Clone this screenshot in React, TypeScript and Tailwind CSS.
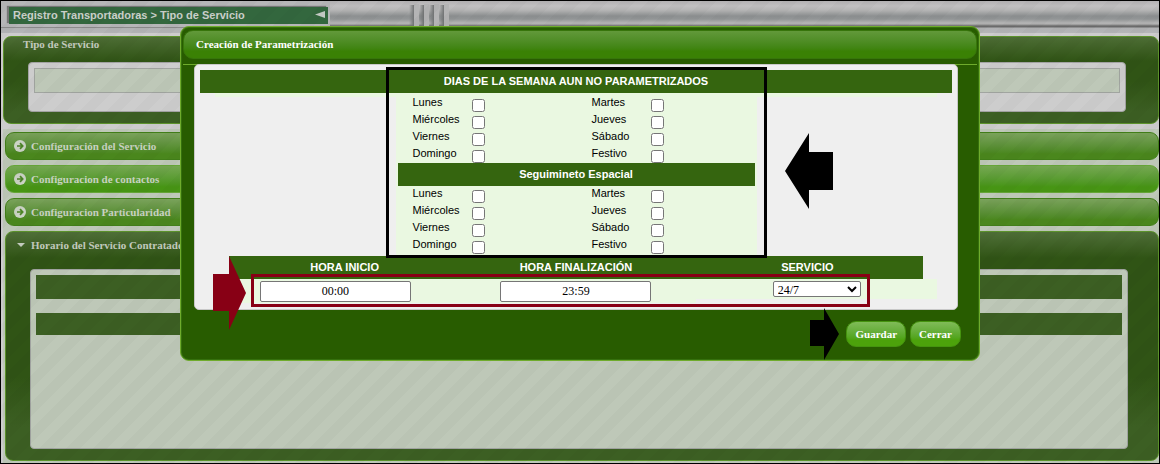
import React from "react";

const SERVICES = ["Configuración del Servicio", "Configuracion de contactos", "Configuracion Particularidad"];
const DAYS = ["Lunes", "Martes", "Miércoles", "Jueves", "Viernes", "Sábado", "Domingo", "Festivo"];

function PageHeader() {
  return (
    <header className="relative flex h-[32px] items-start bg-[linear-gradient(to_bottom,#b3b1b3_0px,#c1c0c1_5px,#b6b6b6_9px,#8d9091_15px,#929596_18px,#b5b5b5_22px,#b0b0b0_23px,#6b6b6b_25px,#6b6b6b_26px,#b0b1b3_27px,#b5b6b9_32px)]">
      <div className="flex h-[26px] w-[329px] items-center bg-[#b6b6b8] pt-[3px] pl-2 shadow-[0_1px_0_#8b8b8b]">
        <h1 className="flex h-[17px] w-[319px] items-center justify-between bg-[#33673e] pr-[3px] pl-1 font-['Liberation_Sans',sans-serif] text-[11px] font-bold text-[#cbd0cb] shadow-[-2px_-1px_1px_#777]">
          Registro Transportadoras &gt; Tipo de Servicio
          <svg className="mb-[2px] h-[7px] w-[10px]" viewBox="0 0 10 7" aria-hidden="true">
            <path d="M0 3.5 10 0v7z" fill="#c6ccc6" />
          </svg>
        </h1>
      </div>
      <svg className="ml-[79px] h-[25px] w-[48px]" viewBox="0 0 48 25" aria-hidden="true">
        <defs>
          <linearGradient id="rib">
            <stop offset="0" stopColor="#777a7b" stopOpacity="0" />
            <stop offset="1" stopColor="#707273" />
          </linearGradient>
        </defs>
        {[5, 15, 25, 35].map((x) => (
          <g key={x}>
            <path d={`M${x - 5} 4h5v21h-5z`} fill="url(#rib)" />
            <path d={`M${x} 3h5v22h-5z`} fill="#b4b4b5" />
          </g>
        ))}
      </svg>
    </header>
  );
}

function ArrowCircle() {
  return (
    <svg className="size-3 shrink-0" viewBox="0 0 12 12" aria-hidden="true">
      <circle cx="6" cy="6" r="6" fill="#cbd3c5" />
      <path d="M3 6h5M6 3.2 8.7 6 6 8.8" fill="none" stroke="#4d8527" strokeWidth="1.7" />
    </svg>
  );
}

function Background() {
  return (
    <div className="relative flex min-h-[462px] flex-col overflow-hidden bg-[#cdcccd]">
      <PageHeader />
      <section className="mt-[3px] ml-[2px] flex h-[88px] flex-col rounded-[8px] border border-[#5c932b] bg-[linear-gradient(to_bottom,#4d6d35_0px,#305415_24px,#305415_45px,#3c5f23_75px)] pr-[32px] pl-[24px]">
        <h2 className="ml-[-5px] h-[25px] text-[11px] leading-[15px] font-bold text-[#c3cabe]">Tipo de Servicio</h2>
        <div className="h-[50px] rounded-[4px] border border-[#a3a3a3] bg-[#cdcdcd] p-[5px]">
          <div className="h-[25px] border border-[#a1a5a0] bg-[#bec8b8]" />
        </div>
      </section>
      <div className="mt-[5px] ml-[2px] flex flex-1 flex-col gap-[5px] bg-[#bec8b8] pt-[3px] pl-[2px]">
        {SERVICES.map((name, i) => (
          <a
            key={name}
            href="#"
            className={
              i === 1
                ? "flex h-[28px] items-center gap-[5px] rounded-[9px] border border-[#66a638] bg-linear-to-b from-[#75a751] to-[#479514] to-80% pl-[8px] text-[11px] font-bold text-[#c9d4c1]"
                : "flex h-[28px] items-center gap-[5px] rounded-[9px] border border-[#427f19] bg-linear-to-b from-[#7aa25b] to-[#4a871d] to-80% pl-[8px] text-[11px] font-bold text-[#c9d2c2]"
            }
          >
            <ArrowCircle />
            {name}
          </a>
        ))}
        <section className="h-[230px] rounded-[8px] border border-[#5c932b] bg-[linear-gradient(to_bottom,#4f6f38_0px,#305415_26px,#305415_145px,#3c5f23_195px)] pr-[30px] pl-[24px]">
          <h2 className="ml-[-14px] flex h-[37px] items-start gap-[6px] text-[11px] leading-[27px] font-bold text-[#c3cabe]">
            <svg className="mt-[11px] h-[4px] w-[9px]" viewBox="0 0 9 4" aria-hidden="true">
              <path d="M1 0h8L5 4z" fill="#c3cabe" />
            </svg>
            Horario del Servicio Contratado
          </h2>
          <div className="flex h-[180px] flex-col gap-[14px] rounded-[4px] border border-[#a0a3a0] bg-[#bec8b8] p-[5px]">
            <div className="h-[24px] bg-[#3c5f23]" />
            <div className="h-[22px] bg-[#3c5f23]" />
          </div>
        </section>
      </div>
      <div className="pointer-events-none absolute inset-0 bg-[linear-gradient(135deg,rgba(0,0,0,0.02)_25%,transparent_25%,transparent_50%,rgba(0,0,0,0.02)_50%,rgba(0,0,0,0.02)_75%,transparent_75%)] bg-size-[27px_27px]" />
    </div>
  );
}

function DayChecks({ group }: { group: string }) {
  return (
    <div className="grid grid-cols-[179px_auto] pl-[17px]">
      {DAYS.map((day) => (
        <label key={day} className="flex h-[17px] items-start text-[11px] leading-[15px] text-black">
          <span className="w-[59px]">{day}</span>
          <input type="checkbox" name={group} value={day} className="mt-[4px] size-[13px]" />
        </label>
      ))}
    </div>
  );
}

const timeInput =
  "h-[21px] w-[151px] rounded-[2px] border border-[#767676] bg-white text-center font-['Liberation_Serif',serif] text-[12px] text-black";

function Dialog() {
  return (
    <div
      role="dialog"
      aria-labelledby="dialog-title"
      className="relative w-[800px] rounded-[9px] border border-[#6fab2c] bg-[#285c00] p-[2px] shadow-[inset_0_0_0_1px_#35700d]"
    >
      <h2
        id="dialog-title"
        className="mt-px flex h-[29px] items-center rounded-[10px] border border-[#37750b] bg-linear-to-b from-[#62993a] to-[#3a8104] to-75% pl-[12px] text-[11px] font-bold text-white"
      >
        Creación de Parametrización
      </h2>
      <div className="mt-[5px] border-t border-[#6fab2c] px-[11px]">
        <div className="mt-[-1px] mr-[8px] h-[246px] rounded-[5px] border border-[#c8c8c8] bg-[#efefef] px-[5px] pt-[5px] font-['Liberation_Sans',sans-serif]">
          <div className="relative">
            <h3 className="flex h-[23px] items-center justify-center bg-[#35650f] text-[11px] font-bold text-white">
              DIAS DE LA SEMANA AUN NO PARAMETRIZADOS
            </h3>
            <div className="mx-auto h-[163px] w-[722px] bg-[linear-gradient(#eaf8e1_4px,transparent_4px)]">
              <div className="mx-auto h-[163px] w-[361px] bg-[#eaf8e1] pt-[2px]">
                <DayChecks group="dias" />
                <h3 className="mx-[2px] flex h-[23px] items-center justify-center bg-[#35650f] text-[11px] font-bold text-white">
                  Seguimineto Espacial
                </h3>
                <DayChecks group="seguimiento" />
              </div>
            </div>
            <div className="pointer-events-none absolute -top-[3px] left-[186px] z-10 h-[191px] w-[381px] border-3 border-black" />
          </div>
          <div className="mx-auto w-[722px]">
            <div className="relative">
              <table className="block">
                <thead className="mx-[14px] block h-[23px] bg-[#35650f] text-[11px] leading-[23px] text-white">
                  <tr className="grid grid-cols-3">
                    <th>HORA INICIO</th>
                    <th>HORA FINALIZACIÓN</th>
                    <th>SERVICIO</th>
                  </tr>
                </thead>
                <tbody className="block">
                  <tr className="grid grid-cols-3 items-start text-center">
                    <td className="flex h-[24px] justify-center bg-[#eaf8e1] pt-[2px]">
                      <input aria-label="Hora inicio" defaultValue="00:00" className={timeInput} />
                    </td>
                    <td className="flex h-[24px] justify-center bg-[#eaf8e1] pt-[2px]">
                      <input aria-label="Hora finalización" defaultValue="23:59" className={timeInput} />
                    </td>
                    <td className="flex h-[20px] justify-center bg-[#eaf8e1] pt-[2px]">
                      <select
                        aria-label="Servicio"
                        className="h-[16px] w-[88px] rounded-[2px] border border-[#767676] bg-white font-['Liberation_Serif',serif] text-[12px] leading-[14px] text-black"
                      >
                        <option>24/7</option>
                      </select>
                    </td>
                  </tr>
                </tbody>
              </table>
              <div className="pointer-events-none absolute top-[18px] left-[36px] h-[33px] w-[619px] border-3 border-[#880015]" />
            </div>
          </div>
        </div>
      </div>
      <div className="flex h-[48px] items-start justify-end gap-[4px] pt-[11px] pr-[16px]">
        {["Guardar", "Cerrar"].map((label) => (
          <button
            key={label}
            type="button"
            className="h-[26px] rounded-[10px] border border-[#45930f] bg-linear-to-b from-[#80bb58] to-[#4ca20b] to-75% px-[8px] text-[11px] font-bold text-white"
          >
            {label}
          </button>
        ))}
      </div>
      <svg className="pointer-events-none absolute top-[106px] left-[604px] h-[76px] w-[48px]" viewBox="0 0 48 76" aria-hidden="true">
        <path d="M0 38 24 0v19h24v38H24v19z" />
      </svg>
      <svg className="pointer-events-none absolute top-[229px] left-[32px] h-[74px] w-[33px]" viewBox="0 0 33 74" aria-hidden="true">
        <path d="M33 37 16 0v18H0v37h16v19z" fill="#880015" />
      </svg>
      <svg className="pointer-events-none absolute top-[281px] left-[629px] h-[52px] w-[29px]" viewBox="0 0 29 52" aria-hidden="true">
        <path d="M29 26 14 0v12H0v26h14v14z" />
      </svg>
    </div>
  );
}

export default function App() {
  return (
    <main className="relative border border-black font-['Liberation_Serif',serif]">
      <Background />
      <div className="absolute inset-x-0 top-[25px] flex justify-center">
        <Dialog />
      </div>
    </main>
  );
}
